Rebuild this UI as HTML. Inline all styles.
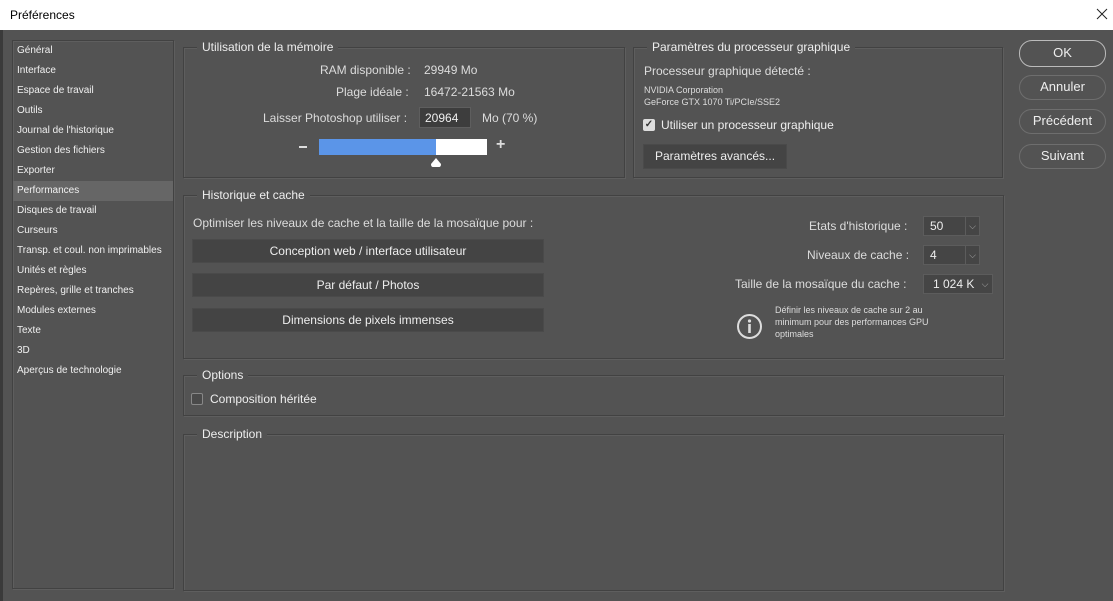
<!DOCTYPE html>
<html><head><meta charset="utf-8"><style>
*{margin:0;padding:0;box-sizing:border-box}
body{width:1113px;height:601px;overflow:hidden;background:#535353;font-family:"Liberation Sans",sans-serif;color:#e6e6e6;position:relative}
.a{position:absolute;white-space:nowrap}
#title{left:0;top:0;width:1113px;height:30px;background:#fff;color:#000;font-size:12px}
.box{position:absolute;border:1px solid #424242;box-shadow:inset 1px 1px 0 #5e5e5e, 1px 1px 0 #5e5e5e}
.leg{position:absolute;background:#535353;padding:0 5px;font-size:12px;color:#eee;top:-8px;left:13px;line-height:14px}
.list div{height:20px;line-height:20px;font-size:10px;padding-left:4px;color:#f0f0f0}
.t{font-size:12px;color:#dcdcdc}
.btn{position:absolute;background:#444;border:1px solid #4a4a4a;color:#eee;font-size:12px;text-align:center}
.rb{position:absolute;left:1019px;width:87px;height:25px;border:1.5px solid #6e6e6e;border-radius:13px;text-align:center;line-height:22px;font-size:13px;color:#eee}
.sel{position:absolute;height:20px;background:#454545;border:1px solid #5c5c5c;font-size:12px;line-height:18px;padding-left:6px;color:#eee}
.sel span{position:absolute;right:0;top:0;width:14px;height:18px;border-left:1px solid #5c5c5c;text-align:center;font-size:9px;color:#aaa}
</style></head><body>
<div class="a" id="title"><span class="a" style="left:10px;top:8px">Préférences</span><svg class="a" style="left:1096px;top:8px" width="12" height="12"><path d="M1 1L11 11M11 1L1 11" stroke="#222" stroke-width="1"/></svg></div>
<div class="a" style="left:0;top:30px;width:3px;height:571px;background:#3a3a3a"></div>

<div class="box list" style="left:12px;top:40px;width:162px;height:549px;padding-top:0">
<div>Général</div><div>Interface</div><div>Espace de travail</div><div>Outils</div><div>Journal de l'historique</div><div>Gestion des fichiers</div><div>Exporter</div><div style="background:#666">Performances</div><div>Disques de travail</div><div>Curseurs</div><div>Transp. et coul. non imprimables</div><div>Unités et règles</div><div>Repères, grille et tranches</div><div>Modules externes</div><div>Texte</div><div>3D</div><div>Aperçus de technologie</div>
</div>

<div class="box" style="left:183px;top:47px;width:442px;height:131px"><div class="leg">Utilisation de la mémoire</div></div>
<span class="a t" style="left:320px;top:63px">RAM disponible :</span>
<span class="a t" style="left:424px;top:63px">29949 Mo</span>
<span class="a t" style="left:336px;top:85px">Plage idéale :</span>
<span class="a t" style="left:424px;top:85px">16472-21563 Mo</span>
<span class="a t" style="left:263px;top:111px">Laisser Photoshop utiliser :</span>
<div class="a" style="left:419px;top:107px;width:52px;height:21px;background:#3d3d3d;border:1px solid #5e5e5e;font-size:12px;padding:3px 5px;color:#eee">20964</div>
<span class="a t" style="left:482px;top:111px">Mo (70 %)</span>
<div class="a" style="left:299px;top:146px;width:8px;height:2px;background:#ddd"></div>
<div class="a" style="left:319px;top:139px;width:168px;height:16px;background:#fff"></div>
<div class="a" style="left:319px;top:139px;width:117px;height:16px;background:#5b95e8"></div>
<span class="a" style="left:496px;top:136px;font-size:16px;color:#ddd;font-weight:bold">+</span>
<svg class="a" style="left:430px;top:157px" width="12" height="11"><path d="M6 1 L11 7 Q11 10 9 10 L3 10 Q1 10 1 7 Z" fill="#fff"/></svg>

<div class="box" style="left:633px;top:47px;width:370px;height:131px"><div class="leg">Paramètres du processeur graphique</div></div>
<span class="a t" style="left:644px;top:64px">Processeur graphique détecté :</span>
<span class="a" style="left:644px;top:85px;font-size:9px;color:#ddd">NVIDIA Corporation</span>
<span class="a" style="left:644px;top:97px;font-size:9px;color:#ddd">GeForce GTX 1070 Ti/PCIe/SSE2</span>
<div class="a" style="left:643px;top:119px;width:12px;height:12px;background:#ddd;border-radius:2px;color:#333;font-size:10px;line-height:12px;text-align:center;font-weight:bold">✓</div>
<span class="a t" style="left:661px;top:118px;color:#eee">Utiliser un processeur graphique</span>
<div class="btn" style="left:643px;top:144px;width:144px;height:25px;line-height:23px">Paramètres avancés...</div>

<div class="rb" style="top:40px;height:27px;border-color:#bbb;line-height:24px">OK</div>
<div class="rb" style="top:75px">Annuler</div>
<div class="rb" style="top:109px">Précédent</div>
<div class="rb" style="top:144px">Suivant</div>

<div class="box" style="left:183px;top:195px;width:821px;height:164px"><div class="leg">Historique et cache</div></div>
<span class="a t" style="left:193px;top:216px">Optimiser les niveaux de cache et la taille de la mosaïque pour :</span>
<div class="btn" style="left:192px;top:239px;width:352px;height:24px;line-height:22px">Conception web / interface utilisateur</div>
<div class="btn" style="left:192px;top:273px;width:352px;height:24px;line-height:22px">Par défaut / Photos</div>
<div class="btn" style="left:192px;top:308px;width:352px;height:24px;line-height:22px">Dimensions de pixels immenses</div>
<span class="a t" style="left:809px;top:219px">Etats d'historique :</span>
<div class="sel" style="left:923px;top:216px;width:57px">50<span>⌵</span></div>
<span class="a t" style="left:807px;top:248px">Niveaux de cache :</span>
<div class="sel" style="left:923px;top:245px;width:57px">4<span>⌵</span></div>
<span class="a t" style="left:735px;top:277px">Taille de la mosaïque du cache :</span>
<div class="sel" style="left:923px;top:274px;width:70px;padding-left:9px">1 024 K <span style="border:none">⌵</span></div>
<svg class="a" style="left:736px;top:313px" width="27" height="27"><circle cx="13.5" cy="13.5" r="11.5" fill="none" stroke="#ddd" stroke-width="2"/><circle cx="13.5" cy="8" r="1.6" fill="#ddd"/><rect x="12.2" y="11" width="2.6" height="9" fill="#ddd"/></svg>
<div class="a" style="left:775px;top:304px;font-size:9px;line-height:12px;color:#ddd;white-space:normal;width:190px">Définir les niveaux de cache sur 2 au<br>minimum pour des performances GPU<br>optimales</div>

<div class="box" style="left:183px;top:375px;width:821px;height:41px"><div class="leg">Options</div></div>
<div class="a" style="left:191px;top:393px;width:12px;height:12px;border:1px solid #888;background:#4a4a4a;border-radius:2px"></div>
<span class="a t" style="left:210px;top:392px;color:#eee">Composition héritée</span>

<div class="box" style="left:183px;top:434px;width:821px;height:157px"><div class="leg">Description</div></div>
</body></html>
